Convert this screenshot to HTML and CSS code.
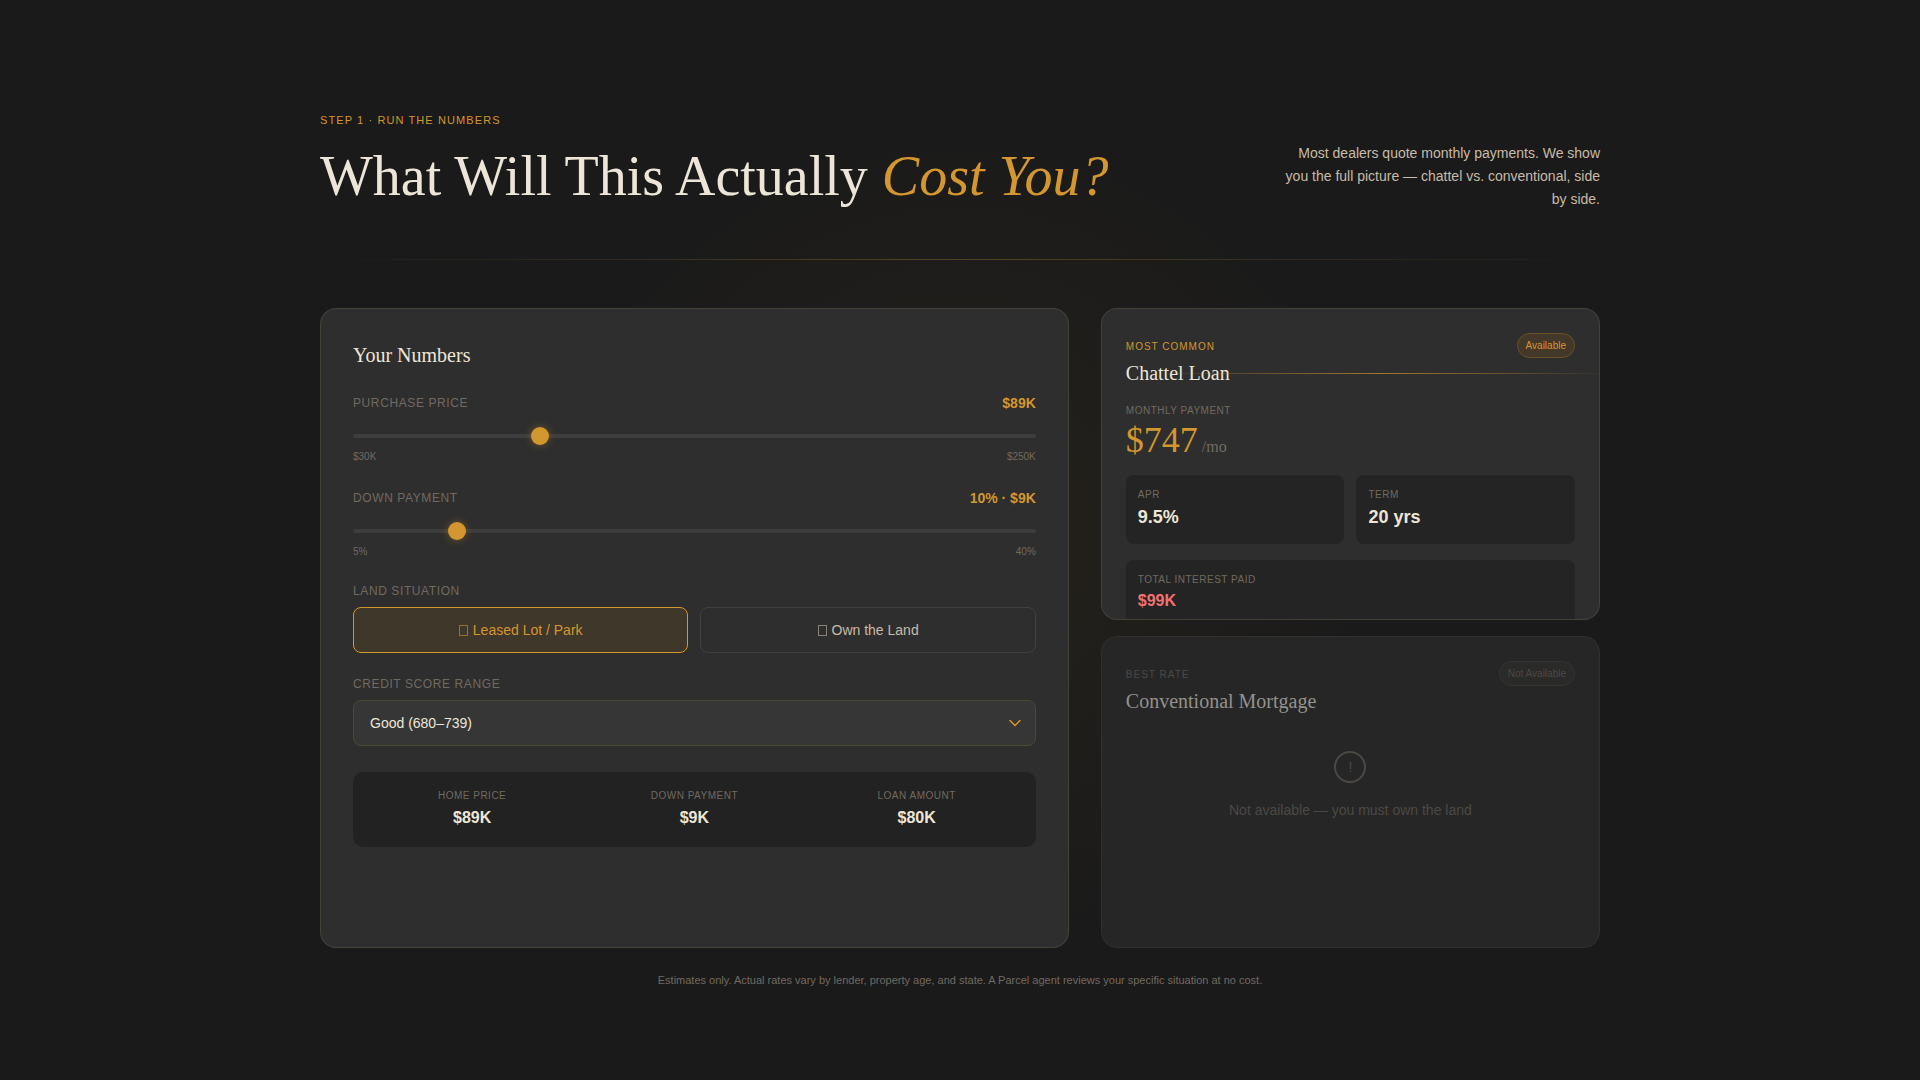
FILE: index.html
```html
<!DOCTYPE html>
<html lang="en">
<head>
<meta charset="utf-8">
<meta name="viewport" content="width=device-width, initial-scale=1">
<title>Run the Numbers</title>
<link rel="stylesheet" href="styles.css">
</head>
<body>
<main class="page">
  <header class="intro">
    <div>
      <p class="intro-step">Step 1 · Run the Numbers</p>
      <h1 class="intro-title">What Will This Actually <em>Cost You?</em></h1>
    </div>
    <p class="intro-text">Most dealers quote monthly payments. We show you the full picture — chattel vs. conventional, side by side.</p>
  </header>
  <hr class="divider">
  <div class="layout">
    <form class="card numbers">
      <h2 class="numbers-title">Your Numbers</h2>
      <div class="field">
        <div class="field-head">
          <label class="label" for="price">Purchase Price</label>
          <output class="field-value" for="price">$89K</output>
        </div>
        <input class="slider" id="price" type="range" min="30" max="250" value="89">
        <div class="field-range"><span>$30K</span><span>$250K</span></div>
      </div>
      <div class="field">
        <div class="field-head">
          <label class="label" for="down">Down Payment</label>
          <output class="field-value" for="down">10% · $9K</output>
        </div>
        <input class="slider" id="down" type="range" min="5" max="40" value="10">
        <div class="field-range"><span>5%</span><span>40%</span></div>
      </div>
      <div class="field" role="group" aria-labelledby="land">
        <span class="label label-block" id="land">Land Situation</span>
        <div class="choices">
          <button class="choice choice-on" type="button"><span class="box"></span>Leased Lot / Park</button>
          <button class="choice" type="button"><span class="box"></span>Own the Land</button>
        </div>
      </div>
      <div class="field">
        <label class="label label-block" for="credit">Credit Score Range</label>
        <div class="select-wrap">
          <select class="select" id="credit"><option>Good (680–739)</option></select>
          <svg class="select-arrow" width="12" height="8" viewBox="0 0 12 8" aria-hidden="true"><path d="M1 1.5l5 5 5-5" fill="none" stroke="#d4962e" stroke-width="1.5" stroke-linecap="round"/></svg>
        </div>
      </div>
      <dl class="summary">
        <div><dt class="small-label">Home Price</dt><dd class="summary-value">$89K</dd></div>
        <div><dt class="small-label">Down Payment</dt><dd class="summary-value">$9K</dd></div>
        <div><dt class="small-label">Loan Amount</dt><dd class="summary-value">$80K</dd></div>
      </dl>
    </form>
    <div class="loans">
      <section class="card loan loan-lined">
        <header class="loan-head">
          <div class="loan-names">
            <p class="loan-tag">Most Common</p>
            <h2 class="loan-name">Chattel Loan</h2>
          </div>
          <span class="badge">Available</span>
        </header>
        <p class="small-label">Monthly Payment</p>
        <p class="payment"><span>$747</span><span class="payment-unit">/mo</span></p>
        <dl class="stats">
          <div class="stat"><dt class="small-label">APR</dt><dd class="stat-value">9.5%</dd></div>
          <div class="stat"><dt class="small-label">Term</dt><dd class="stat-value">20 yrs</dd></div>
          <div class="stat stat-wide"><dt class="small-label">Total Interest Paid</dt><dd class="stat-total">$99K</dd></div>
        </dl>
      </section>
      <section class="card loan loan-off">
        <header class="loan-head">
          <div class="loan-names">
            <p class="loan-tag">Best Rate</p>
            <h2 class="loan-name">Conventional Mortgage</h2>
          </div>
          <span class="badge">Not Available</span>
        </header>
        <div class="notice">
          <span class="notice-icon">!</span>
          <p>Not available — you must own the land</p>
        </div>
      </section>
    </div>
  </div>
  <p class="footnote">Estimates only. Actual rates vary by lender, property age, and state. A Parcel agent reviews your specific situation at no cost.</p>
</main>
</body>
</html>
```
FILE: styles.css
```css
:root {
  --amber: #d4962e;
  --cream: #ede6d8;
  --sand: #c8bba8;
  --muted: #716a60;
  --serif: "Liberation Serif", serif;
}
* { box-sizing: border-box; margin: 0; }
body {
  min-height: 100vh;
  background: radial-gradient(circle 420px at 50% 540px, rgba(212, 150, 46, 0.06), transparent) #1a1a1a;
  color: var(--cream);
  font-family: "Liberation Sans", sans-serif;
  font-size: 14px;
  line-height: 23px;
}
.page { max-width: 1328px; margin: 0 auto; padding: 112px 24px 64px; }
.intro { display: flex; justify-content: space-between; align-items: flex-end; gap: 32px; }
.intro-step {
  margin-bottom: 12px;
  color: var(--amber);
  font-size: 11px;
  line-height: 17px;
  letter-spacing: 0.1em;
  text-transform: uppercase;
}
.intro-title { font-family: var(--serif); font-weight: 400; font-size: 56px; line-height: 70px; }
.intro-title em { color: var(--amber); }
.intro-text { max-width: 320px; color: var(--sand); text-align: right; }
.divider {
  height: 1px;
  margin: 48px 0;
  border: 0;
  background: linear-gradient(90deg, transparent, rgba(212, 150, 46, 0.3), transparent);
}
.layout { display: grid; grid-template-columns: 3fr 2fr; gap: 32px; min-height: 640px; }
.card {
  border: 1px solid rgba(212, 190, 120, 0.13);
  border-radius: 16px;
  background: #2e2e2e;
}
.numbers { padding: 32px; display: flex; flex-direction: column; gap: 22px; }
.numbers-title { font-family: var(--serif); font-weight: 400; font-size: 20px; line-height: 29px; }
.field-head { display: flex; justify-content: space-between; align-items: center; height: 22px; margin-bottom: 13px; }
.label {
  color: var(--muted);
  font-size: 12px;
  line-height: 19px;
  letter-spacing: 0.05em;
  text-transform: uppercase;
}
.label-block { display: block; margin-bottom: 6px; }
.field-value { color: var(--amber); font-weight: 700; }
.slider { display: block; width: 100%; height: 18px; margin: 0; background: none; appearance: none; }
.slider::-webkit-slider-runnable-track { height: 4px; border-radius: 2px; background: #3d3d3d; }
.slider::-webkit-slider-thumb {
  appearance: none;
  width: 18px;
  height: 18px;
  margin-top: -7px;
  border-radius: 50%;
  background: var(--amber);
  box-shadow: 0 0 8px rgba(212, 150, 46, 0.4);
}
.field-range {
  display: flex;
  justify-content: space-between;
  margin-top: 4px;
  color: var(--muted);
  font-size: 10px;
  line-height: 16px;
}
.choices { display: grid; grid-template-columns: 1fr 1fr; gap: 12px; }
.choice {
  display: flex;
  justify-content: center;
  align-items: center;
  gap: 5px;
  height: 46px;
  border: 1px solid #414141;
  border-radius: 8px;
  background: none;
  color: var(--sand);
  font: inherit;
}
.choice-on { border-color: var(--amber); background: #40372b; color: var(--amber); }
.box { width: 9px; height: 11px; border: 1px solid; opacity: 0.6; }
.select-wrap { display: grid; align-items: center; }
.select {
  grid-area: 1 / 1;
  width: 100%;
  height: 46px;
  padding: 0 16px;
  border: 1px solid #4b4a33;
  border-radius: 8px;
  background: #363636;
  color: var(--cream);
  font: inherit;
  appearance: none;
}
.select-arrow { grid-area: 1 / 1; justify-self: end; margin-right: 15px; pointer-events: none; }
.summary {
  display: grid;
  grid-template-columns: repeat(3, 1fr);
  gap: 16px;
  margin-top: 4px;
  padding: 16px 16px 15px;
  border-radius: 10px;
  background: #222;
  text-align: center;
}
.small-label {
  color: var(--muted);
  font-size: 10px;
  line-height: 16px;
  letter-spacing: 0.05em;
  text-transform: uppercase;
}
.summary-value { font-weight: 700; font-size: 16px; line-height: 28px; }
.loans { display: grid; grid-template-rows: 1fr 1fr; gap: 16px; }
.loan { position: relative; height: 312px; padding: 24px; overflow: hidden; }
.loan-lined::before {
  content: "";
  position: absolute;
  top: 64px;
  left: 48px;
  right: -16px;
  height: 1px;
  background: linear-gradient(90deg, transparent, var(--amber), transparent);
  opacity: 0.7;
}
.loan-head { display: flex; justify-content: space-between; align-items: flex-start; margin-bottom: 14px; }
.loan-names { padding-top: 6px; }
.loan-tag {
  color: var(--amber);
  font-size: 10px;
  line-height: 16px;
  letter-spacing: 0.1em;
  text-transform: uppercase;
}
.loan-name { margin-top: 2px; font-family: var(--serif); font-weight: 400; font-size: 20px; line-height: 32px; }
.badge {
  padding: 4px 8px;
  border: 1px solid #6a5126;
  border-radius: 13px;
  background: #44382a;
  color: var(--amber);
  font-size: 10px;
  line-height: 15px;
}
.payment {
  display: flex;
  align-items: baseline;
  gap: 4px;
  margin-bottom: 14px;
  color: var(--amber);
  font-family: var(--serif);
  font-size: 36px;
  line-height: 42px;
}
.payment-unit { color: var(--muted); font-size: 16px; line-height: 20px; }
.stats { display: grid; grid-template-columns: 1fr 1fr; gap: 16px 12px; }
.stat { padding: 12px; border-radius: 8px; background: #242424; }
.stat-wide { grid-column: 1 / -1; }
.stat-value { font-weight: 700; font-size: 18px; line-height: 29px; }
.stat-total { color: #f07272; font-weight: 700; font-size: 16px; line-height: 26px; }
.loan-off { border-color: #30302e; background: #262626; }
.loan-off .loan-tag, .notice { color: #4c4945; }
.loan-off .loan-name { color: #94918b; }
.loan-off .badge { border-color: #353432; background: #2a2a29; color: #4c4945; }
.notice { display: flex; flex-direction: column; align-items: center; gap: 16px; margin-top: 34px; }
.notice-icon {
  width: 32px;
  height: 32px;
  border: 2px solid #4c4945;
  border-radius: 50%;
  line-height: 28px;
  text-align: center;
}
.footnote { margin-top: 24px; color: var(--muted); font-size: 11px; line-height: 17px; text-align: center; }
```
